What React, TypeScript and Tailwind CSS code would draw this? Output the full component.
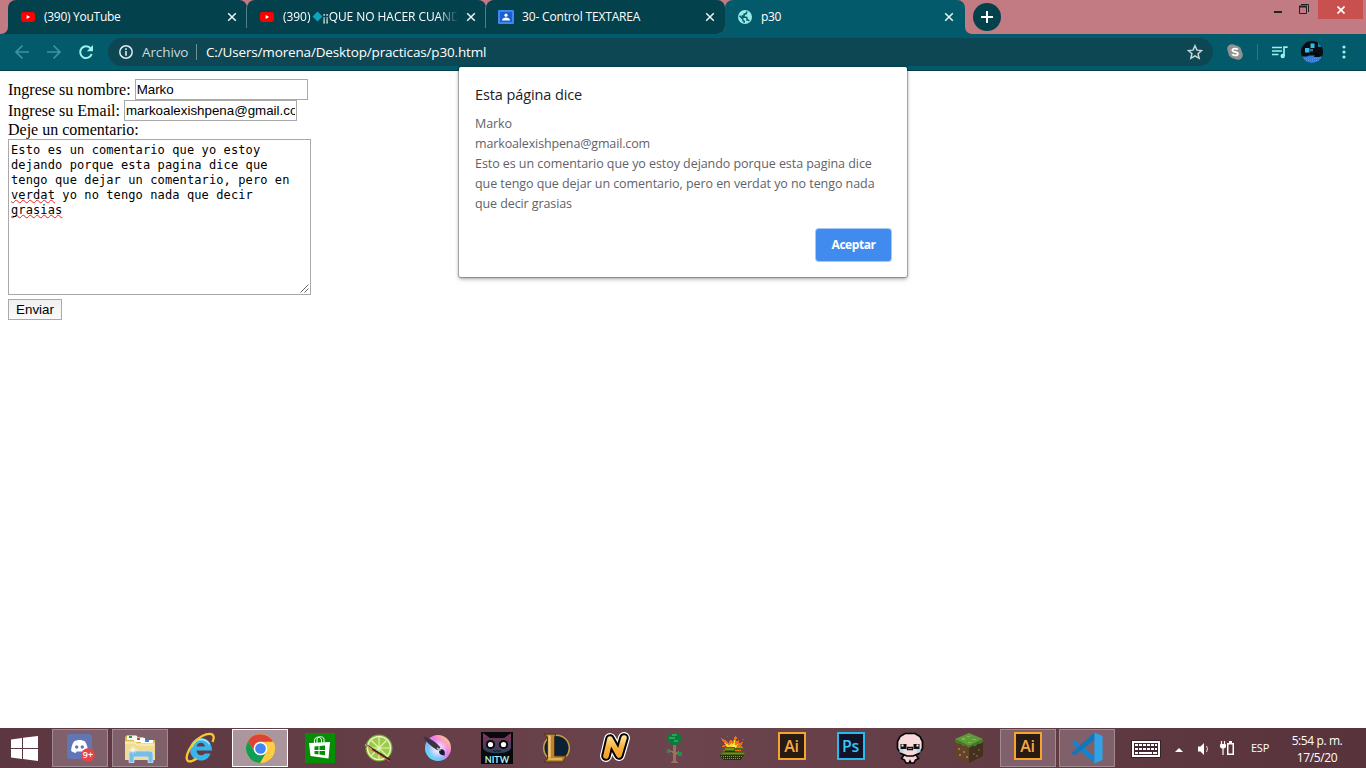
import React from "react";

function YouTubeIcon() {
  return (
    <svg viewBox="0 0 14 10" className="h-[10px] w-[14px] shrink-0">
      <rect width="14" height="10" rx="2.4" fill="#f00" />
      <path d="M5.6 3v4L9.2 5z" fill="#fff" />
    </svg>
  );
}

function ClassroomIcon() {
  return (
    <svg viewBox="0 0 16 14" className="-ml-px h-[14px] w-4 shrink-0">
      <rect width="16" height="14" rx="1" fill="#4285f4" />
      <rect x="2" y="2" width="12" height="10" fill="#1a5fd0" />
      <circle cx="8" cy="5.2" r="1.6" fill="#fff" />
      <path d="M4 10.4c0-2 2-2.8 4-2.8s4 .8 4 2.8z" fill="#fff" />
    </svg>
  );
}

function GlobeIcon() {
  return (
    <svg viewBox="0 0 14 14" className="h-[14px] w-[14px] shrink-0">
      <circle cx="7" cy="7" r="7" fill="#9ae9e6" />
      <path d="M8.600 1.500v1.200c0 .7-.6 1.200-1.300 1.200H6.200v1.300c0 .5-.4.800-.8.800H4.300v1.200h3.900c.5 0 .8.400.8.800v1.900h.8c.6 0 1.100.4 1.300 1" fill="none" stroke="#035a6b" strokeWidth="1.500" />
      <path d="m1.500 5.800 3.400 3.400v.7c0 .7.600 1.300 1.300 1.300v1.500" fill="none" stroke="#035a6b" strokeWidth="1.500" />
    </svg>
  );
}

function Cross() {
  return (
    <svg viewBox="0 0 10 10" className="h-[10px] w-[10px] shrink-0">
      <path d="m1.2 1.2 7.6 7.6m0-7.6L1.2 8.8" stroke="#f0f4f5" strokeWidth="1.5" />
    </svg>
  );
}

interface TabProps {
  icon: React.ReactNode;
  title: React.ReactNode;
  divider?: boolean;
  titleClass: string;
}

function Tab({ icon, title, divider, titleClass }: TabProps) {
  return (
    <div className="h-full w-[239px] bg-[#c27a83]">
      <div className="flex h-full items-center rounded-t-[8px] bg-[#03414d]">
        <div className="flex w-9 shrink-0 items-center pl-[13px]">{icon}</div>
        <div className={"w-[175px] shrink-0 overflow-hidden whitespace-nowrap text-[12px] leading-4 text-white " + titleClass}>
          {title}
        </div>
        <div className="flex w-[26px] justify-end pr-[8px]">
          <Cross />
        </div>
        {divider && <div className="ml-auto h-[21px] w-px bg-[#4f7f87]" />}
      </div>
    </div>
  );
}

function TabStrip() {
  return (
    <div className="flex h-[34px] bg-[#c27a83]">
      <div className="w-2 bg-[#03414d]">
        <div className="h-full rounded-br-[7px] bg-[#c27a83]" />
      </div>
      <Tab icon={<YouTubeIcon />} title="(390) YouTube" titleClass="tracking-[-0.28px]" divider />
      <Tab
        icon={<YouTubeIcon />}
        title={
          <>
            (390) <span className="mx-[1px] mb-px inline-block h-[7px] w-[7px] rotate-45 bg-[#0da5bd]" />
            <span>¡¡QUE NO HACER CUAND</span>
          </>
        }
        titleClass="tracking-[-0.06px] [mask-image:linear-gradient(to_right,black_155px,transparent_175px)]"
        divider
      />
      <div className="flex bg-[#035a6b]">
        <div className="overflow-hidden rounded-br-[8px]">
          <Tab icon={<ClassroomIcon />} title="30- Control TEXTAREA" titleClass="tracking-[-0.16px]" />
        </div>
      </div>
      <div className="h-full w-[240px] bg-[#c27a83]">
        <div className="flex h-full items-center rounded-t-[8px] bg-[#035a6b]">
          <div className="flex w-9 items-center pl-[13px]">
            <GlobeIcon />
          </div>
          <div className="w-[175px] text-[12px] leading-4 tracking-[-0.3px] text-white">p30</div>
          <div className="flex w-[26px] justify-end pr-[8px]">
            <Cross />
          </div>
        </div>
      </div>
      <div className="w-2 bg-[#035a6b]">
        <div className="h-full rounded-bl-[7px] bg-[#c27a83]" />
      </div>
      <div className="mt-[3px] flex h-7 w-7 items-center justify-center rounded-full bg-[#03414d]">
        <svg viewBox="0 0 12 12" className="h-3 w-3">
          <path d="M6 0v12M0 6h12" stroke="#fff" strokeWidth="2" />
        </svg>
      </div>
      <div className="ml-auto flex h-[19px]">
        <svg viewBox="0 0 48 19" className="h-[19px] w-12">
          <path d="M4 12h8" stroke="#222" strokeWidth="2" />
          <path d="M29.5 6.5h7v7h-7z" fill="none" stroke="#222" />
          <path d="M29 6.5h8" stroke="#222" strokeWidth="2" />
          <path d="M31 4.5h7.5V12" fill="none" stroke="#222" />
        </svg>
        <div className="mr-[3px] flex w-[45px] items-center justify-center bg-[#c8504e]">
          <svg viewBox="0 0 8 8" className="h-2 w-2">
            <path d="m.5.5 7 7m0-7-7 7" stroke="#fff" strokeWidth="1.7" />
          </svg>
        </div>
      </div>
    </div>
  );
}

function Toolbar() {
  return (
    <div className="flex h-[37px] items-start border-b border-[#033f4b] bg-[#035a6b]">
      <svg viewBox="0 0 108 36" className="h-9 w-[108px] shrink-0" fill="none">
        <path d="M29 18H16m6.5-6.5L16 18l6.5 6.5M47 18h13m-6.5-6.5L60 18l-6.5 6.5" stroke="#3b95a0" strokeWidth="1.7" />
        <path d="M90.8 14.6A5.9 5.9 0 1 0 91.7 20" stroke="#9df0ec" strokeWidth="2" />
        <path d="M93 11v6.2h-6.2z" fill="#9df0ec" />
      </svg>
      <div className="mt-1 flex h-[28px] w-[1105px] shrink-0 items-center rounded-full bg-[#0d4753] pl-[11px] text-[14px]">
        <svg viewBox="0 0 14 14" className="h-[14px] w-[14px]">
          <circle cx="7" cy="7" r="6.2" fill="none" stroke="#e4eaeb" strokeWidth="1.5" />
          <path d="M7 3.2v1.7M7 6v4.8" stroke="#e4eaeb" strokeWidth="1.6" />
        </svg>
        <span className="ml-[9px] w-[54px] whitespace-nowrap text-[13.5px] tracking-[-0.1px] text-[#cbd8da]">Archivo</span>
        <span className="h-4 w-px bg-[#6f9098]" />
        <span className="ml-[9px] whitespace-nowrap text-[13.5px] tracking-[-0.155px] text-white">
          C:/Users/morena/Desktop/practicas/p30.html
        </span>
        <svg viewBox="0 0 24 24" className="ml-auto mr-[10px] h-4 w-4">
          <path d="m12 2.500 2.900 6.700 7 .6-5.300 4.700 1.600 7-6.200-3.700-6.200 3.700 1.600-7-5.300-4.700 7-.6z" fill="none" stroke="#cbd8da" strokeWidth="2.200" />
        </svg>
      </div>
      <div className="flex h-9 flex-1 items-center">
        <svg viewBox="0 0 16 16" className="ml-[14px] h-4 w-4">
          <circle cx="5" cy="5" r="4.8" fill="#929292" />
          <circle cx="11" cy="11" r="4.8" fill="#929292" />
          <circle cx="8" cy="8" r="6.8" fill="#929292" />
          <path d="M10.8 5.5C9.8 4.2 5.4 4 5.4 6.2c0 2.3 5.5 1.2 5.5 3.5 0 2.3-4.8 2-5.7.4" fill="none" stroke="#fff" strokeWidth="1.8" />
        </svg>
        <div className="ml-[14px] h-4 w-px bg-[#277988]" />
        <svg viewBox="0 0 16 13" className="ml-[14px] h-[13px] w-4">
          <path d="M0 1.5h10M0 5h10M0 8.5h6.5M12 10V1.2h3.7" stroke="#9df0ec" strokeWidth="1.7" fill="none" />
          <circle cx="10.7" cy="10" r="2.2" fill="#9df0ec" />
        </svg>
        <svg viewBox="0 0 22 22" className="ml-[13px] h-[22px] w-[22px]">
          <defs>
            <clipPath id="avatar"><circle cx="11" cy="11" r="11" /></clipPath>
          </defs>
          <g clipPath="url(#avatar)">
            <path d="M0 0h22v22H0z" fill="#0b0d12" />
            <path d="M0 15.500h6l2-1h6l2 1h6V22H0z" fill="#2f7edc" />
            <path d="M4 7h4.500v4.500H4zM9.500 2.500h4v4.500h-4z" fill="#30bfea" />
            <path d="M17 2h3v4h-3zM9 8h3v2.500H9z" fill="#197ca0" />
            <path d="m13 16 2-5 4 5z" fill="#050608" />
            <path d="M1 17.500h20M3 19.500h16" stroke="#4a96ea" strokeDasharray="1 1" />
          </g>
        </svg>
        <svg viewBox="0 0 4 14" className="ml-[19px] h-[14px] w-1" fill="#9df0ec">
          <circle cx="2" cy="2" r="1.6" /><circle cx="2" cy="7" r="1.6" /><circle cx="2" cy="12" r="1.6" />
        </svg>
      </div>
    </div>
  );
}

function CommentForm() {
  return (
    <form className="px-2 pt-2 font-['Liberation_Serif',serif] text-[16px] text-black">
      <label className="flex h-[21px] items-center">
        <span className="whitespace-nowrap">Ingrese su nombre:</span>
        <input
          readOnly
          value="Marko"
          className="ml-[4px] h-[21px] w-[173px] border border-[#a9a9a9] bg-white px-px font-['Liberation_Sans',sans-serif] text-[13.33px] outline-none"
        />
      </label>
      <label className="flex h-[21px] items-center">
        <span className="whitespace-nowrap">Ingrese su Email:</span>
        <input
          readOnly
          value="markoalexishpena@gmail.com"
          className="ml-[4px] h-[21px] w-[173px] border border-[#a9a9a9] bg-white px-px font-['Liberation_Sans',sans-serif] text-[13.33px] outline-none"
        />
      </label>
      <div className="h-[18px] leading-[18px]">Deje un comentario:</div>
      <div className="flex h-[156px] w-[303px] flex-col border border-[#a9a9a9] px-[2px] pt-[3px] font-['DejaVu_Sans_Mono',monospace] text-[12px] leading-[15px] tracking-[0.105px]">
        <div className="whitespace-pre">
          <div>Esto es un comentario que yo estoy</div>
          <div>dejando porque esta pagina dice que</div>
          <div>tengo que dejar un comentario, pero en</div>
          <div>
            <span className="underline decoration-[#f02020] decoration-wavy decoration-[1px] underline-offset-[0px]">verdat</span> yo no tengo nada que decir
          </div>
          <div>
            <span className="underline decoration-[#f02020] decoration-wavy decoration-[1px] underline-offset-[0px] [text-decoration-skip-ink:none]">grasias</span>
          </div>
        </div>
        <svg viewBox="0 0 9 9" className="-mr-px mb-px ml-auto mt-auto h-[9px] w-[9px]">
          <path d="m.5 8.5 8-8M4.5 8.5l4-4" stroke="#666" />
        </svg>
      </div>
      <button
        type="button"
        className="mt-1 flex h-[21px] w-[54px] items-center justify-center border border-[#a9a9a9] bg-linear-to-b from-[#f0f0f0] to-[#fafafa] font-['Liberation_Sans',sans-serif] text-[13.33px]"
      >
        Enviar
      </button>
    </form>
  );
}

function AlertDialog() {
  return (
    <div
      role="dialog"
      className="absolute left-[459px] top-[67px] flex h-[210px] w-[448px] flex-col rounded-[2px] bg-white px-4 pb-4 shadow-[0_0_1px_1px_rgba(0,0,0,0.28),0_2px_4px_rgba(0,0,0,0.35)]"
    >
      <h1 className="mt-[18px] h-5 whitespace-nowrap text-[14.5px] leading-5 tracking-[-0.1px] text-[#202124]">Esta página dice</h1>
      <div className="mt-[9px] whitespace-nowrap text-[12.5px] leading-5 text-[#5f6368]">
        <p className="tracking-[-0.1px]">Marko</p>
        <p className="tracking-[-0.14px]">markoalexishpena@gmail.com</p>
        <p className="tracking-[-0.06px]">Esto es un comentario que yo estoy dejando porque esta pagina dice</p>
        <p className="tracking-[-0.06px]">que tengo que dejar un comentario, pero en verdat yo no tengo nada</p>
        <p className="tracking-[-0.1px]">que decir grasias</p>
      </div>
      <button
        type="button"
        className="ml-auto mt-auto flex h-8 w-[75px] items-center justify-center rounded-[3px] bg-[#418bee] text-[12px] font-bold tracking-[-0.45px] text-white shadow-[0_0_0_1px_#a5c8f8]"
      >
        Aceptar
      </button>
    </div>
  );
}

function Discord() {
  return (
    <svg viewBox="0 0 30 30" className="h-[30px] w-[30px]">
      <rect x="2" y="1" width="25" height="25" rx="3" fill="#6176b5" />
      <path d="M9 8.500c3.400-2 7.600-2 11 0 2 3 3 6.500 2.800 9.500-1.500 1.200-3 1.800-4.500 2l-1-1.600h-5.600l-1 1.600c-1.500-.2-3-.8-4.500-2C6 15 7 11.500 9 8.500z" fill="#fff" />
      <circle cx="11.700" cy="14" r="1.700" fill="#6176b5" />
      <circle cx="17.300" cy="14" r="1.700" fill="#6176b5" />
      <circle cx="23" cy="22" r="6.800" fill="#ed4245" />
      <text x="23" y="25.300" textAnchor="middle" fontSize="9" fontWeight="600" fill="#fff" fontFamily="Open Sans">9+</text>
    </svg>
  );
}

function Explorer() {
  return (
    <svg viewBox="0 0 32 30" className="h-[30px] w-8">
      <path d="M1 27V4l2-2h9l2 2h5l3 3h9v20z" fill="#dcb85a" />
      <path d="M3 3h10v4H3z" fill="#f6f6e8" /><path d="M5 3h3v2H5z" fill="#18a530" />
      <path d="M10 5h11v4H10z" fill="#fff" /><path d="M13 5h3v2h-3z" fill="#e13a28" />
      <path d="M17 7h12v4H17z" fill="#fff" /><path d="M21 7h4v2h-4z" fill="#268dea" />
      <path d="M1 8h10l2 2h18v17H1z" fill="#f0dc91" />
      <path d="M1 10h10l2 2h17" fill="none" stroke="#fff5c6" />
      <path d="M5 29.500V20q0-2 2-2h19q3 0 3 3v8.500h-5V24H10v5.500z" fill="#79bde4" stroke="#c9e8f8" strokeWidth=".8" />
      <path d="M9 13v8M5 17h8M6.500 14.500l5 5m0-5-5 5" stroke="#fff" strokeWidth=".7" />
    </svg>
  );
}

function InternetExplorer() {
  return (
    <svg viewBox="0 0 32 32" className="h-8 w-8" fill="none">
      <path d="M26.500 21.500c-1.500 4.500-5 7-9.500 7-6.500 0-11-4.500-11-11S10.500 6 17 6s11 5 11 12.500H12.500c.3 3 2 4.800 4.500 4.800 2 0 3-.6 3.700-1.800z" fill="#37b6ed" />
      <path d="M12.500 14.500H21c-.3-2.500-2-3.800-4-3.800-2.500 0-4 1.500-4.500 3.800z" fill="#633e48" />
      <path d="M8 15C10 9.500 13 7.500 17 7.500c3.500 0 6.500 1.500 8.500 5" stroke="#a5e7fd" strokeWidth="1.500" />
      <path d="M28.500 10c2-4 1.500-7-1-7.800C22.500 1 14 5 8.500 12.500 3.500 19 1 27 4 29c2 1.200 5.500-.4 8.500-2.500" stroke="#f8c82d" strokeWidth="2.300" />
    </svg>
  );
}

function Chrome() {
  return (
    <svg viewBox="0 0 32 32" className="h-[31px] w-[31px]">
      <circle cx="16" cy="16" r="15" fill="#ffcd42" />
      <path d="M3 8.500a15 15 0 0 1 26 0.500H16a7 7 0 0 0-6.300 10z" fill="#db4437" />
      <path d="M3 8.500A15 15 0 0 0 15.500 31l6.500-11.500a7 7 0 0 1-12.300-.5z" fill="#0f9d58" />
      <circle cx="16" cy="16" r="7" fill="#fff" />
      <circle cx="16" cy="16" r="5.500" fill="#4285f4" />
    </svg>
  );
}

function Store() {
  return (
    <svg viewBox="0 0 30 30" className="h-[30px] w-[30px]">
      <path d="M0 0h30v30H0z" fill="#058d03" />
      <path d="M9.500 10V7.500c0-4.500 7-4.500 7 0V10M12 10V6c0-3 7-3 7 0v4" fill="none" stroke="#fff" />
      <path d="m4 10 21-1-1.500 16.500L5.500 23z" fill="#fff" />
      <path d="m9.500 13.500 4-.4V17h-4zM14.500 13l5.500-.5V17h-5.500zM9.500 18h4v3.500l-4-.5zM14.500 18H20v4.300l-5.500-.7z" fill="#058d03" />
    </svg>
  );
}

function Lime() {
  return (
    <svg viewBox="0 0 30 30" className="h-[30px] w-[30px]">
      <circle cx="15" cy="15" r="13.500" fill="#77a932" />
      <circle cx="15" cy="15" r="12.300" fill="#edf4ca" />
      <circle cx="15" cy="15" r="10.800" fill="#9bcb48" />
      <path d="M15 4v22M4 15h22M7.500 7.500l15 15m0-15-15 15" stroke="#e7f2b8" strokeWidth="1.200" />
      <path d="m2 12 24 15" stroke="#31211b" strokeWidth="1.800" />
      <path d="m4 14.500 22 14" stroke="#e34e2d" />
      <path d="m1 11.500 7 5" stroke="#dfb173" strokeWidth="1.200" />
    </svg>
  );
}

function Krita() {
  return (
    <svg viewBox="0 0 30 30" className="h-[30px] w-[30px]">
      <defs>
        <linearGradient id="kritaDisc" x1="0" y1="1" x2="1" y2="0">
          <stop stopColor="#47f6ee" /><stop offset=".35" stopColor="#80baff" /><stop offset=".6" stopColor="#f477ed" /><stop offset="1" stopColor="#ffec60" />
        </linearGradient>
        <radialGradient id="kritaCore"><stop offset=".2" stopColor="#f2efff" /><stop offset="1" stopColor="#f2efff" stopOpacity="0" /></radialGradient>
      </defs>
      <circle cx="15" cy="15" r="13" fill="url(#kritaDisc)" />
      <circle cx="15" cy="16" r="10" fill="url(#kritaCore)" />
      <path d="M0 3.500c6 .5 13 5.500 17.500 11l-3 3C9 14 3 9 0 3.500z" fill="#373542" />
      <path d="M16.500 16.500c4.500-1 6 2 5 6-4-.5-6.500-2-5-6z" fill="#171c2b" />
      <path d="m14 15 3.500 2.500" stroke="#b8b9c4" strokeWidth="1.600" />
    </svg>
  );
}

function Nitw() {
  return (
    <svg viewBox="0 0 32 32" className="h-8 w-8">
      <defs>
        <linearGradient id="cat" x2="0" y2="1"><stop stopColor="#8a3457" /><stop offset="1" stopColor="#2d4260" /></linearGradient>
      </defs>
      <path d="M0 0h32v32H0z" fill="#07090c" />
      <path d="m2 1 7 5h14l7-5v15c-2 7-26 7-28 0z" fill="url(#cat)" />
      <circle cx="9.500" cy="12.500" r="4.600" fill="#08090b" /><circle cx="22.500" cy="12.500" r="4.600" fill="#08090b" />
      <circle cx="9.500" cy="12.500" r="2.600" fill="#fff" /><circle cx="22.500" cy="12.500" r="2.600" fill="#fff" />
      <path d="M12 18.500q2 2 4 0q2 2 4 0" stroke="#121b25" fill="none" />
      <text x="16" y="30.500" textAnchor="middle" fontSize="9" fontWeight="700" fill="#a9edf5" fontFamily="Lato">NITW</text>
    </svg>
  );
}

function League() {
  return (
    <svg viewBox="0 0 30 30" className="h-[30px] w-[30px]">
      <circle cx="15.500" cy="15" r="12.800" fill="#0b2136" stroke="#c99a40" strokeWidth="1.600" />
      <path d="M3 1h12l-1.500 3v19H25l-3 6H3.500l3-3.500V4z" fill="#b9852f" stroke="#4e3115" />
      <path d="M8.500 2.500v22" stroke="#f0c877" strokeWidth="2.400" />
      <path d="M7 26h14" stroke="#e8bb62" strokeWidth="1.600" />
    </svg>
  );
}

function NShape() {
  return (
    <svg viewBox="0 0 32 32" className="h-8 w-8" fill="none" strokeLinejoin="round" strokeLinecap="round">
      <defs>
        <linearGradient id="gold" gradientUnits="userSpaceOnUse" x1="0" y1="3" x2="0" y2="28">
          <stop stopColor="#ffe9a0" /><stop offset=".5" stopColor="#f8b13c" /><stop offset="1" stopColor="#f19d26" />
        </linearGradient>
      </defs>
      <path d="m7 24 4-17 9 16 5-17" stroke="#fff" strokeWidth="12" />
      <path d="m7 24 4-17 9 16 5-17" stroke="#000" strokeWidth="9.600" />
      <path d="m7 24 4-17 9 16 5-17" stroke="url(#gold)" strokeWidth="5.600" />
    </svg>
  );
}

function Tree() {
  return (
    <svg viewBox="0 0 16 32" className="h-8 w-4" shapeRendering="crispEdges">
      <path d="M7 12h3v8l3-1v2l-3 2v6l2 2H4l3-2v-8l-4-2v-1l4 1z" fill="#9a705c" />
      <path d="M5 1h7v1h2v2h1v6h-2v2h-2v1H6v-1H3v-2H1V4h2V2h2z" fill="#0c7a3c" />
      <path d="M6 2h5v2H6zM3 5h6v2H3zM8 8h4v2H8z" fill="#25a556" />
      <path d="M1 17h3v4H1zM12 20h4v4h-4z" fill="#1c934a" />
    </svg>
  );
}

function Tank() {
  return (
    <svg viewBox="0 0 26 26" className="mb-px h-[26px] w-[26px]" shapeRendering="crispEdges">
      <path d="m1 3 4 2 4 3 1-3 3 1 2-5 2 1-1 4 3-1v3l4-1-2 4 2 2-2 3H3l2-3-4-2 4-1z" fill="#f0701a" />
      <path d="m5 8 4 2 2-2 2 1 2-5v6l3-1-2 4H8z" fill="#ffd927" />
      <path d="M10 12h3v-2l2 2v2h-5z" fill="#fff3a2" />
      <path d="M4 11h2v1H4zM7 1h1v1H7zM22 4h2v1h-2z" fill="#e24118" />
      <path d="M4 12h10l1 1h8v2h-8v2h10v2l-2 1H1v-3h3z" fill="#4e6813" />
      <path d="M5 13h9v2H5zM2 18h22v1H2z" fill="#7c8a1f" />
      <path d="M5 16h10v1H5zM0 20h24l-2 3-2 2H3l-3-3z" fill="#26340d" />
      <path d="M1 21.500h21M3 23.500h17" stroke="#8b9943" strokeDasharray="1 1" />
    </svg>
  );
}

function AdobeTile({ label, className }: { label: string; className: string }) {
  return (
    <div className={"mb-[4px] flex h-7 w-7 items-center justify-center border-2 font-['Open_Sans',sans-serif] text-[16px] leading-none font-semibold tracking-[-0.2px] " + className}>
      {label}
    </div>
  );
}

function Isaac() {
  return (
    <svg viewBox="0 0 28 32" className="h-8 w-7">
      <path d="M8 23h12l2.500 3.500-3 1.500-1.500 3h-3l-1-2-1 2h-3l-1.500-3-3-1.500z" fill="#f7d6d6" stroke="#050505" strokeWidth="1.600" />
      <path d="M9 1.500h10l5 3 2.500 5v7l-3.500 5-6 2.500h-6l-6-2.500-3.500-5v-7L4 4.500z" fill="#f9dada" stroke="#050505" strokeWidth="1.700" />
      <path d="M4.500 12h6v5h-6zM17.500 12h6v5h-6z" fill="#111" />
      <path d="M5.500 12.500h2v2h-2zM20.500 12.500h2v2h-2z" fill="#fff" />
      <path d="M3.500 17h4v3.500h-4zM20.500 17h4v3.500h-4z" fill="#a6dbee" />
      <path d="M11.500 17.500v-2h5v2z" fill="#fff" stroke="#111" strokeWidth="1.300" />
    </svg>
  );
}

function Minecraft() {
  return (
    <svg viewBox="0 0 28 30" className="h-[30px] w-7">
      <path d="m14 0 14 6v17l-14 7-14-7V6z" fill="#654329" />
      <path d="m14 13 14-7v17l-14 7z" fill="#44301f" />
      <path d="m14 0 14 6-14 7L0 6z" fill="#5f9c39" />
      <path d="m0 6 14 7 14-7v3l-3 2-2-.5-3 3-2-1-4 2.500-4-2.500-2 .5-3-2.500-2 .5-3-2.500z" fill="#477b2b" />
      <path d="M3 15h2v2H3zM8 18h2v2H8zM4 21h2v2H4zM11 23h2v2h-2z" fill="#96765a" />
      <path d="M18 20h2v2h-2zM23 16h2v2h-2zM21 22h2v2h-2z" fill="#6a4e37" />
      <path d="M12 3h3v1h-3zM7 5h3v2H7zM17 6h4v1h-4zM13 9h3v1h-3z" fill="#7abb4c" />
    </svg>
  );
}

function VsCode() {
  return (
    <svg viewBox="0 0 32 32" className="h-8 w-8">
      <path d="M.5 11 3.500 8.500 23.500 24v7.500L.5 11z" fill="#1683ce" />
      <path d="M.5 21 23.500.500V8L3.500 23.500z" fill="#1077b8" />
      <path d="m23.500.5 8 3.500v24l-8 3.500z" fill="#2fa3ea" />
    </svg>
  );
}

function Slot({ children, frame, wide }: { children: React.ReactNode; frame?: "open" | "focused"; wide?: boolean }) {
  return (
    <div className={"flex h-10 shrink-0 items-center justify-center " + (wide ? "w-[60px]" : "w-[59px]")}>
      <div
        className={
          "flex h-[38px] w-14 items-center justify-center " +
          (frame === "focused"
            ? "border border-white bg-[#ab969d]"
            : frame === "open"
              ? "border border-[#a18b93] bg-[#80606a]"
              : "")
        }
      >
        {children}
      </div>
    </div>
  );
}

function Taskbar() {
  return (
    <div className="flex h-10 overflow-hidden bg-linear-to-r from-[#5c3640] via-[#6b444d] to-[#58333b]">
      <div className="flex w-[50px] shrink-0 items-center justify-center pr-px">
        <svg viewBox="0 0 27 25" className="h-[25px] w-[27px]" fill="#fff">
          <path d="m0 3.500 11-1.600V12H0zM12 1.700 27 0v12H12zM0 13h11v10L0 21.500zM12 13h15v12l-15-1.900z" />
        </svg>
      </div>
      <Slot wide frame="open"><Discord /></Slot>
      <Slot wide frame="open"><Explorer /></Slot>
      <Slot wide><InternetExplorer /></Slot>
      <Slot wide frame="focused"><Chrome /></Slot>
      <Slot><Store /></Slot>
      <Slot><Lime /></Slot>
      <Slot><Krita /></Slot>
      <Slot><Nitw /></Slot>
      <Slot><League /></Slot>
      <Slot><NShape /></Slot>
      <Slot><Tree /></Slot>
      <Slot><Tank /></Slot>
      <Slot><AdobeTile label="Ai" className="border-[#f8a32c] bg-[#271b13] text-[#f9a942]" /></Slot>
      <Slot><AdobeTile label="Ps" className="border-[#2ab9ec] bg-[#111329] text-[#38c6f4]" /></Slot>
      <Slot><Isaac /></Slot>
      <Slot><Minecraft /></Slot>
      <Slot frame="open"><AdobeTile label="Ai" className="border-[#f8a32c] bg-[#271b13] text-[#f9a942]" /></Slot>
      <Slot frame="open"><VsCode /></Slot>
      <div className="flex flex-1 items-center text-white">
        <svg viewBox="0 0 30 18" className="ml-[15px] mt-px h-[18px] w-[30px]" shapeRendering="crispEdges">
          <path d="M0 0h30v18H0z" fill="#3b1f27" />
          <path d="M1 1h28v16H1z" fill="#fff" />
          <path d="M3 3h24v12H3z" fill="#432730" />
          <path d="M4 5h22M4 9h22" stroke="#fff" strokeWidth="2" strokeDasharray="3 1" />
          <path d="M4 13h3m1 0h13m1 0h4" stroke="#fff" strokeWidth="2" />
        </svg>
        <svg viewBox="0 0 8 5" className="ml-[14px] mt-[2px] h-[5px] w-2"><path d="m0 5 4-4 4 4z" fill="#fff" /></svg>
        <svg viewBox="0 0 14 14" className="ml-[14px] mt-px h-[14px] w-[14px]">
          <path d="M1 4.500h2.500L7 1v12L3.500 9.500H1z" fill="#fff" />
          <path d="M9.500 4q2 3 0 6" stroke="#e5d9dc" fill="none" />
        </svg>
        <svg viewBox="0 0 16 16" className="ml-[8px] h-4 w-4" fill="none" stroke="#fff">
          <path d="M8.750 3.750h5.500v10.500h-5.500z" strokeWidth="1.500" />
          <path d="M10 2h3" strokeWidth="2" />
          <path d="M2.500 1v3M5.500 1v3M4 8v7" strokeWidth="1.200" />
          <path d="M1.500 4.500h5V7l-1 1h-3l-1-1z" fill="#fff" />
        </svg>
        <span className="ml-4 w-[20px] whitespace-nowrap text-[11px] tracking-[-0.25px]">ESP</span>
        <div className="ml-[11px] w-[70px] whitespace-nowrap pt-px text-center text-[12px] leading-[17px] tracking-[-0.4px]">
          <div>5:54 p. m.</div>
          <div>17/5/20</div>
        </div>
      </div>
    </div>
  );
}

export default function App() {
  return (
    <div className="relative flex h-[768px] w-[1366px] flex-col overflow-hidden bg-white font-['Open_Sans','Noto_Sans',sans-serif]">
      <TabStrip />
      <Toolbar />
      <main className="flex-1">
        <CommentForm />
      </main>
      <Taskbar />
      <AlertDialog />
    </div>
  );
}
